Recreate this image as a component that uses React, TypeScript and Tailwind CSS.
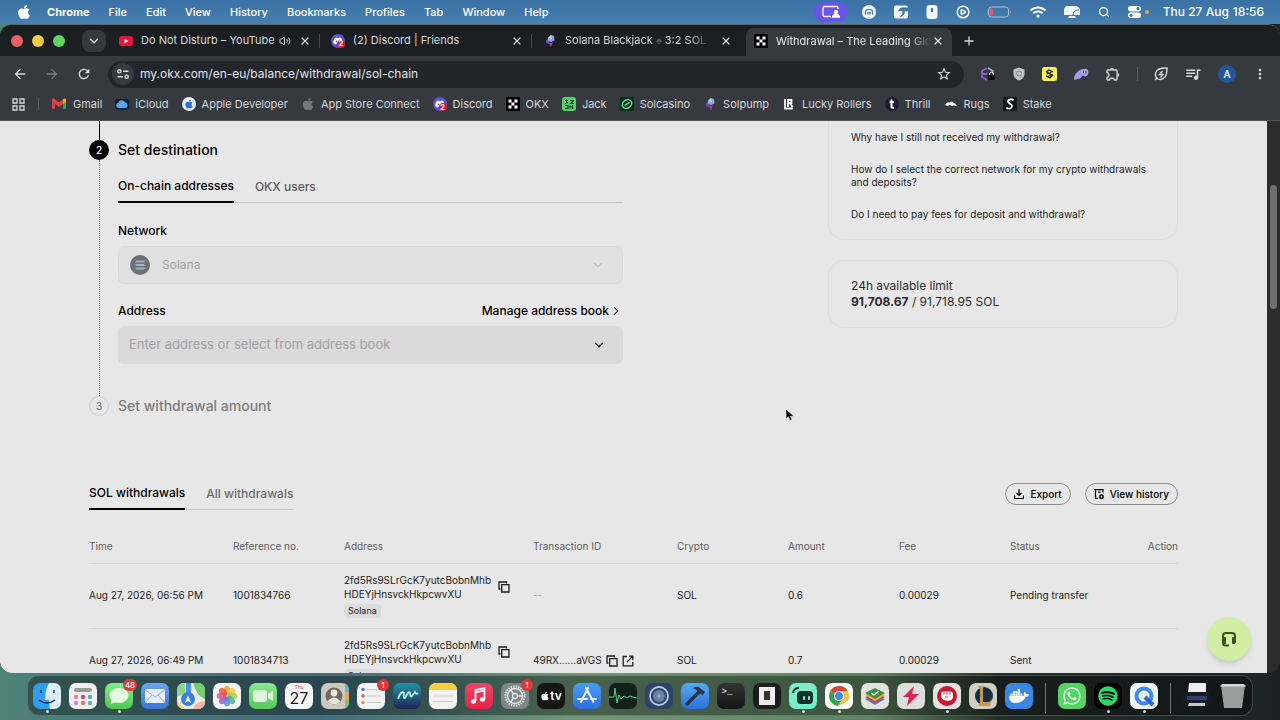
import React from "react";
import { ChevronDown, ChevronRight, CirclePlay, Plus, Search, Volume2, X } from "lucide-react";
import { FaApple, FaDiscord, FaDocker, FaSpotify, FaWhatsapp, FaWifi } from "react-icons/fa";
import {
  MdArrowBack,
  MdArrowForward,
  MdMoreVert,
  MdOutlineExtension,
  MdQueueMusic,
  MdRefresh,
  MdStarBorder,
} from "react-icons/md";

const menus = ["File", "Edit", "View", "History", "Bookmarks", "Profiles", "Tab", "Window", "Help"];

/* ---------- small brand icons ---------- */

function YoutubeIcon() {
  return (
    <svg viewBox="0 0 14 14" className="size-3.5 shrink-0">
      <rect y="2" width="14" height="10" rx="3" fill="#e0173f" />
      <path d="M5.5 4.8v4.4L9.4 7z" fill="#fff" />
    </svg>
  );
}

function DiscordIcon() {
  return (
    <span className="relative flex size-3.5 shrink-0 items-center justify-center rounded-full bg-[#5a55d6]">
      <FaDiscord className="size-2.5 text-white" />
      <span className="absolute right-0 bottom-0 flex size-2 items-center justify-center rounded-full bg-[#d2243f] text-[7px] leading-none font-bold text-white">
        2
      </span>
    </span>
  );
}

function SolpumpIcon() {
  return (
    <svg viewBox="0 0 14 14" className="size-3.5 shrink-0">
      <path d="M8 1l3 1 .5 4.5L8 8 4 7l1-3z" fill="#8fa6d8" />
      <path d="M3 6l4 1-1 3-3-1z" fill="#6b4fc0" />
      <path d="M6 9l4-.5L8 13z" fill="#9a48b8" />
      <path d="M8 1l1 4-4-1z" fill="#a7e0e0" />
    </svg>
  );
}

function OkxIcon() {
  return (
    <svg viewBox="0 0 14 14" className="size-3.5 shrink-0">
      <rect width="14" height="14" rx="1" fill="#000" />
      <path
        d="M2.5 2.5h3v3h-3zM8.5 2.5h3v3h-3zM5.5 5.5h3v3h-3zM2.5 8.5h3v3h-3zM8.5 8.5h3v3h-3z"
        fill="#fff"
      />
    </svg>
  );
}

function GmailIcon() {
  return (
    <svg viewBox="0 0 16 14" className="h-3.5 w-4 shrink-0">
      <path d="M12 6v6h3V3z" fill="#34a853" />
      <path d="M1 3c0-1.5 1.5-1.8 2.5-1L8 5.5 12.5 2c1-.8 2.5-.5 2.5 1v1.5L8 10 1 4.500z" fill="#e5413a" />
      <path d="M12 2.4c1.2-1 3-.6 3 1v1.2l-3 2.3z" fill="#fbbc04" />
      <path d="M1 4.500V12h3V6.800z" fill="#d93c52" />
    </svg>
  );
}

function CloudIcon() {
  return (
    <svg viewBox="0 0 14 14" className="size-3.5 shrink-0">
      <rect y="2" width="14" height="11" rx="3" fill="#14222f" />
      <path d="M3.500 11a2.700 2.700 0 01-.2-5.300A3.600 3.600 0 0110 5.200a3 3 0 01.5 5.800z" fill="#55a8ee" />
    </svg>
  );
}

function AppleDevIcon() {
  return (
    <span className="flex size-3.5 shrink-0 items-center justify-center rounded-full bg-[#e4eefb]">
      <FaApple className="size-2.5 text-[#2d6fd8]" />
    </span>
  );
}

function JackIcon() {
  return (
    <svg viewBox="0 0 14 14" className="size-3.5 shrink-0">
      <rect width="14" height="14" rx="3" fill="#55cf6a" />
      <path
        d="M3 3.500h3M4.500 2.500v4M3 6.500l3-1M8 3.500h3.500L9 6.500h2.500M3 8.500h3v3H3M8 8.500v3M8 10h3M10.500 8v4"
        stroke="#12401d"
        strokeWidth="1.2"
        fill="none"
      />
    </svg>
  );
}

function SolcasinoIcon() {
  return (
    <svg viewBox="0 0 14 14" className="size-3.5 shrink-0">
      <rect width="14" height="14" rx="2" fill="#0b2a1e" />
      <g transform="rotate(-35 7 7)" fill="none" stroke="#5fd99a" strokeWidth="1.5">
        <ellipse cx="7" cy="7" rx="5" ry="4" />
        <path d="M4 7h6" />
      </g>
    </svg>
  );
}

function LuckyIcon() {
  return (
    <svg viewBox="0 0 14 14" className="size-3.5 shrink-0">
      <path d="M3 2v9.500h8M6 10V3h3.500v3H6M8 6l2.500 4" stroke="#f4f4f4" strokeWidth="1.8" fill="none" />
    </svg>
  );
}

function ThrillIcon() {
  return (
    <svg viewBox="0 0 14 14" className="size-3.5 shrink-0">
      <circle cx="7" cy="7" r="7" fill="#1d1b33" />
      <path d="M6.500 2.500v7q0 1.500 2.500 1.300M4.500 5.200H9" stroke="#fff" strokeWidth="2" fill="none" />
    </svg>
  );
}

function RugsIcon() {
  return (
    <svg viewBox="0 0 14 14" className="size-3.5 shrink-0">
      <path d="M1 8q2-3.500 4.500-2.500Q8 3.500 9.500 6q2 0 3.500 3l-3-.5-2 .5-2-1-2.500 1z" fill="#f4f4f4" />
    </svg>
  );
}

function StakeIcon() {
  return (
    <svg viewBox="0 0 14 14" className="size-3.5 shrink-0">
      <rect width="14" height="14" rx="1" fill="#11191e" />
      <path
        d="M10.500 3.500C9 1.500 5 2 5 4.600 5 6.800 9.200 6.800 9 9.200 8.800 12 5 12.400 3.500 10.500"
        stroke="#fff"
        strokeWidth="1.8"
        fill="none"
      />
    </svg>
  );
}

function CopyIcon() {
  return (
    <svg viewBox="0 0 12 12" className="size-3 shrink-0" fill="none" stroke="currentColor" strokeWidth="1.3">
      <path d="M2.500 8H1V1h7.500v1.500" />
      <path d="M3.700 3.700H11V11H3.700z" />
    </svg>
  );
}

function OpenIcon() {
  return (
    <svg viewBox="0 0 12 12" className="size-3 shrink-0" fill="none" stroke="currentColor" strokeWidth="1.3">
      <path d="M5 1.500H1.200v9.300h9.600V7M7 1.200h3.800V5M10.600 1.400L5 7" />
    </svg>
  );
}

/* ---------- menu bar ---------- */

function MenuBar() {
  return (
    <header className="flex h-6 shrink-0 items-center justify-between bg-gradient-to-b from-[#3b71a4] to-[#467fb0] px-4 text-[11px] font-medium text-white">
      <nav className="flex items-center gap-[19px]">
        <FaApple className="-mr-1 size-4" />
        <button className="font-bold">Chrome</button>
        {menus.map((m) => (
          <button key={m}>{m}</button>
        ))}
      </nav>
      <div className="flex items-center">
        <span className="mr-[14px] flex h-5 w-[34px] items-center justify-center rounded-full bg-[#6a54e8]">
          <svg viewBox="0 0 18 14" className="h-3.5 w-[18px]" fill="none" stroke="#fff" strokeWidth="1.3">
            <path d="M9 11.500H2.500A1.500 1.500 0 011 10V3a1.500 1.500 0 011.500-1.500h12A1.500 1.500 0 0116 3v1" />
            <circle cx="14" cy="7" r="1.5" fill="#fff" />
            <path d="M10.500 12q.5-2.500 3.500-2.500t3.500 2.500z" fill="#fff" />
          </svg>
        </span>
        <div className="flex items-center gap-[18px]">
          <svg viewBox="0 0 14 14" className="size-3.5">
            <circle cx="7" cy="7" r="7" fill="#eef5fb" />
            <path d="M3.500 9.500V7q0-2.500 2.500-2.500h2Q10.500 4.500 10.500 7v2.500M6 9.500V7.500h2v2" stroke="#4178a9" strokeWidth="1.2" fill="none" />
          </svg>
          <svg viewBox="0 0 14 14" className="size-3.5">
            <rect width="14" height="13" y="0.5" rx="2" fill="#eef5fb" />
            <path d="M14 2.500H8Q5 3 4 6.500L8.500 6Q9 9 5 13 10.500 11 11 6.500L14 6z" fill="#4178a9" />
          </svg>
          <svg viewBox="0 0 12 14" className="h-3.5 w-3">
            <rect x="0.5" width="11" height="14" rx="3" fill="#eef5fb" />
            <path d="M6 3v4" stroke="#34526e" strokeWidth="1.6" />
          </svg>
          <CirclePlay className="size-3.5" strokeWidth={2.5} />
          <svg viewBox="0 0 24 12" className="h-3 w-6">
            <rect x="0.5" y="1" width="20" height="10" rx="3" fill="none" stroke="#a9c6df" />
            <rect x="2" y="2.5" width="3" height="7" rx="1" fill="#d85a78" />
            <path d="M22 4.500q1.500 1.500 0 3z" fill="#a9c6df" />
          </svg>
          <FaWifi className="size-4" />
          <svg viewBox="0 0 16 14" className="h-3.5 w-4">
            <path d="M2 1h11l3 3v6H0V4z" fill="#eef5fb" />
            <path d="M5 11h6l1 2H4z" fill="#eef5fb" />
            <path d="M9 10q0-5 6-5" stroke="#4178a9" fill="none" />
          </svg>
          <Search className="size-3" strokeWidth={2.5} />
          <span className="flex items-center gap-1">
            <svg viewBox="0 0 13 12" className="h-3 w-[13px]">
              <rect width="13" height="5.4" rx="2.7" fill="#fff" />
              <rect y="6.6" width="13" height="5.4" rx="2.7" fill="#fff" />
              <circle cx="10" cy="2.7" r="1.6" fill="#4178a9" />
              <circle cx="3" cy="9.3" r="1.6" fill="#4178a9" />
            </svg>
            <span className="size-1 rounded-full bg-[#f0a04b]" />
          </span>
        </div>
        <span className="ml-[14px] flex gap-1 text-[12px] whitespace-nowrap">
          <span>Thu 27 Aug</span>
          <span>18:56</span>
        </span>
      </div>
    </header>
  );
}

/* ---------- browser chrome ---------- */

const tabs = [
  { id: "youtube", title: "Do Not Disturb – YouTube", icon: <YoutubeIcon />, audio: true },
  { id: "discord", title: "(2) Discord | Friends", icon: <DiscordIcon /> },
  {
    id: "solpump",
    title: (
      <>
        Solana Blackjack <span className="text-[#55595d]">♠</span> 3:2 SOL
      </>
    ),
    icon: <SolpumpIcon />,
  },
  { id: "okx", title: "Withdrawal – The Leading Glo", icon: <OkxIcon />, active: true },
];

const bookmarks = [
  { label: "Gmail", icon: <GmailIcon /> },
  { label: "iCloud", icon: <CloudIcon /> },
  { label: "Apple Developer", icon: <AppleDevIcon /> },
  { label: "App Store Connect", icon: <FaApple className="size-3.5 text-[#74777b]" /> },
  { label: "Discord", icon: <DiscordIcon /> },
  { label: "OKX", icon: <OkxIcon /> },
  { label: "Jack", icon: <JackIcon /> },
  { label: "Solcasino", icon: <SolcasinoIcon /> },
  { label: "Solpump", icon: <SolpumpIcon /> },
  { label: "Lucky Rollers", icon: <LuckyIcon /> },
  { label: "Thrill", icon: <ThrillIcon /> },
  { label: "Rugs", icon: <RugsIcon /> },
  { label: "Stake", icon: <StakeIcon /> },
];

function TabStrip() {
  return (
    <div className="flex h-[31px] shrink-0 items-center bg-[#1b1f21] pl-[11px] text-[11px] text-[#d5d8dc]">
      <div className="flex gap-[9px]">
        <span className="size-3 rounded-full bg-[#ec5f67]" />
        <span className="size-3 rounded-full bg-[#f3cb45]" />
        <span className="size-3 rounded-full bg-[#5fd35f]" />
      </div>
      <button aria-label="Search tabs" className="ml-[17px] flex h-[22px] w-6 items-center justify-center rounded-lg bg-[#35383d]">
        <ChevronDown className="size-3.5" strokeWidth={2.5} />
      </button>
      <div className="ml-0.5 flex h-full items-center">
        {tabs.map((t, i) => (
          <div
            key={t.id}
            className={
              t.active
                ? "ml-0.5 flex h-7 w-[206px] items-center gap-2 self-end rounded-t-lg bg-[#36393e] px-2 pb-0.5 text-[#e6e8ea]"
                : "flex h-7 w-[212px] items-center gap-2 pr-3 pl-[11px]"
            }
          >
            {t.icon}
            <span
              className={
                i > 1
                  ? "flex-1 overflow-hidden [mask-image:linear-gradient(to_right,black_85%,transparent)] whitespace-nowrap"
                  : "flex-1 overflow-hidden whitespace-nowrap"
              }
            >
              {t.title}
            </span>
            {t.audio && <Volume2 className="-ml-1 size-3 shrink-0" />}
            <button aria-label="Close tab" className={t.active ? "-ml-2" : ""}>
              <X className="size-3" strokeWidth={2.5} />
            </button>
            {i < 2 && <span className="-mr-3 h-3.5 w-px bg-[#44484c]" />}
          </div>
        ))}
      </div>
      <button aria-label="New tab" className="ml-2.5">
        <Plus className="size-3.5" strokeWidth={2.2} />
      </button>
    </div>
  );
}

function Toolbar() {
  return (
    <div className="flex h-9 shrink-0 items-center bg-[#36393e] text-[#d5d8dc]">
      <div className="flex items-center gap-4 pl-3">
        <button aria-label="Back">
          <MdArrowBack className="size-4" />
        </button>
        <button aria-label="Forward" className="text-[#7b7f84]">
          <MdArrowForward className="size-4" />
        </button>
        <button aria-label="Reload">
          <MdRefresh className="size-4" />
        </button>
      </div>
      <div className="ml-4 flex h-[27px] flex-1 items-center rounded-full bg-[#22252a] pr-3 pl-1">
        <span className="flex size-[22px] items-center justify-center rounded-full bg-[#36393e]">
          <svg viewBox="0 0 12 10" className="h-2.5 w-3" fill="none" stroke="currentColor" strokeWidth="1.4">
            <circle cx="2.3" cy="2.3" r="1.6" />
            <path d="M6 2.300h5.500M.5 7.700H6" />
            <circle cx="9.7" cy="7.7" r="1.6" />
          </svg>
        </span>
        <input
          aria-label="Address bar"
          defaultValue="my.okx.com/en-eu/balance/withdrawal/sol-chain"
          className="ml-1.5 min-w-0 flex-1 bg-transparent text-[12px] text-[#e1e4e7] outline-none"
        />
        <MdStarBorder className="size-4" />
      </div>
      <div className="flex items-center gap-4 pr-3 pl-4">
        <svg viewBox="0 0 16 14" className="h-3.5 w-4">
          <path d="M7 1L2 4v6l5 3M2 7h5" stroke="#8a63d2" strokeWidth="1.8" fill="none" />
          <path d="M8 1l5 3v3" stroke="#9fb3d8" strokeWidth="1.5" fill="none" />
          <rect x="8" y="7.5" width="7" height="5.5" rx="1" fill="#0c0d0f" />
          <path d="M9.700 8V6q1.800-2 3.600 0v2" stroke="#fff" fill="none" />
        </svg>
        <svg viewBox="0 0 14 14" className="size-3.5">
          <path d="M7 .5l5.500 2v5Q12 11.500 7 13.500 2 11.500 1.500 7.500v-5z" fill="#c0c3c6" />
          <circle cx="7" cy="6.5" r="2.5" fill="none" stroke="#83878b" />
        </svg>
        <svg viewBox="0 0 15 14" className="h-3.5 w-[15px]">
          <rect width="15" height="14" rx="2.5" fill="#f5ef58" />
          <path d="M11 5L7 3 4.500 5l6 3.500L8 11 4 9M4.500 7l5-1.500M6 9.500l5-1.500" stroke="#222" strokeWidth="1.3" fill="none" />
        </svg>
        <svg viewBox="0 0 16 14" className="h-3.5 w-4">
          <path d="M1 12.500Q1 7 6 3.500 10 1 14 2q2 2 1 5.500-2 3-4 1.500l-1.500-.5Q7 13 5 11.500 3 13.500 1 12.500z" fill="#a79be8" />
          <path d="M10.500 4v2M12.800 4v2" stroke="#4b4480" />
        </svg>
        <MdOutlineExtension className="size-4" />
        <span className="h-3.5 w-px bg-[#5a5e63]" />
        <svg viewBox="0 0 14 14" className="size-3.5" fill="none" stroke="currentColor" strokeWidth="1.4">
          <path d="M13 1Q4 .5 2 5q-1.500 4 1 6.500Q7 14 11 10q2-2.500 2-9zM1 13l2.500-2.500M8.500 4L5.500 7.500h3.500L6.500 10.500" />
        </svg>
        <MdQueueMusic className="size-[18px]" />
        <span className="flex size-[18px] items-center justify-center rounded-full bg-[#24559b] text-[10px] font-medium text-white">A</span>
        <MdMoreVert className="size-4" />
      </div>
    </div>
  );
}

function BookmarksBar() {
  return (
    <div className="flex h-[29px] shrink-0 items-center border-b border-[#55575b] bg-[#36393e] pb-1 pl-3 text-[11px] text-[#d5d8dc]">
      <svg viewBox="0 0 13 13" className="size-[13px]" fill="none" stroke="currentColor" strokeWidth="1.3">
        <path d="M1 1h4v4H1zM8 1h4v4H8zM1 8h4v4H1zM8 8h4v4H8z" />
      </svg>
      <span className="mr-3 ml-[13px] h-3 w-px bg-[#5a5e63]" />
      <div className="flex items-center gap-[13px]">
        {bookmarks.map((b) => (
          <a key={b.label} href="#" className="flex items-center gap-1.5 whitespace-nowrap">
            {b.icon}
            {b.label}
          </a>
        ))}
      </div>
    </div>
  );
}

/* ---------- page ---------- */

function SolanaLogo() {
  return (
    <svg viewBox="0 0 20 20" className="size-5 shrink-0">
      <circle cx="10" cy="10" r="10" fill="#6d7175" />
      <path d="M6.500 5.500h9L14 7.500H5zM5 9h9l1.500 2h-9zM6.500 12.500h9L14 14.500H5z" fill="#9db3c8" />
    </svg>
  );
}

function WithdrawForm() {
  return (
    <section className="w-[534px]">
      <div className="flex gap-[9px]">
        <div className="flex w-5 flex-col items-center">
          <span className="h-[19px] w-px bg-black" />
          <span className="flex size-5 items-center justify-center rounded-full bg-black text-[10px] font-medium text-white">2</span>
          <span className="w-px flex-1 border-l border-dotted border-[#777]" />
        </div>
        <div className="flex-1 pt-[19px] pb-8">
          <h2 className="text-[14px] leading-5 font-medium">Set destination</h2>
          <div className="mt-3.5 flex gap-[21px] border-b border-[#c6c6c6] text-[12px] leading-6">
            <button className="-mb-px border-b-2 border-black pb-[3px] font-medium">On-chain addresses</button>
            <button className="pb-[3px] font-medium text-[#5c5c5c]">OKX users</button>
          </div>
          <label htmlFor="network" className="mt-[18px] block text-[12px] leading-5 font-medium">
            Network
          </label>
          <div className="mt-[5px] flex h-[38px] items-center gap-3 rounded-md border border-[#dadada] bg-[#e0e0e0] pr-[17px] pl-[11px]">
            <SolanaLogo />
            <select id="network" disabled className="flex-1 appearance-none bg-transparent text-[12px] text-[#a3a3a3] opacity-100">
              <option>Solana</option>
            </select>
            <ChevronDown className="size-3.5 text-[#c4c4c4]" />
          </div>
          <div className="mt-[17px] flex items-center justify-between text-[12px] leading-5 font-medium">
            <label htmlFor="address">Address</label>
            <a href="#" className="flex items-center">
              Manage address book
              <ChevronRight className="size-3.5" strokeWidth={1.8} />
            </a>
          </div>
          <div className="mt-[5px] flex h-[38px] items-center rounded-md bg-[#dadada] pr-[17px] pl-[11px]">
            <input
              id="address"
              placeholder="Enter address or select from address book"
              className="min-w-0 flex-1 bg-transparent text-[13px] outline-none placeholder:text-[#a0a0a0]"
            />
            <button aria-label="Open address book">
              <ChevronDown className="size-3.5" strokeWidth={2.2} />
            </button>
          </div>
        </div>
      </div>
      <div className="flex items-center gap-[9px]">
        <span className="flex size-5 items-center justify-center rounded-full border border-[#cfcfcf] text-[10px] text-[#6d6d6d]">3</span>
        <h2 className="text-[14px] leading-5 font-medium text-[#7c7c7c]">Set withdrawal amount</h2>
      </div>
    </section>
  );
}

function SideCards() {
  return (
    <aside className="w-[350px]">
      <div className="flex flex-col gap-[19px] rounded-b-2xl border border-t-0 border-[#dedede] px-[22px] pt-[10px] pb-[18px] text-[10px] leading-[13px] text-[#1d1d1d]">
        <a href="#">Why have I still not received my withdrawal?</a>
        <a href="#">How do I select the correct network for my crypto withdrawals and deposits?</a>
        <a href="#">Do I need to pay fees for deposit and withdrawal?</a>
      </div>
      <div className="mt-5 rounded-2xl border border-[#dedede] px-[22px] py-[17px] text-[12px] leading-4 text-[#2b2b2b]">
        <p>24h available limit</p>
        <p>
          <b>91,708.67</b> / 91,718.95 SOL
        </p>
      </div>
    </aside>
  );
}

const withdrawals = [
  { time: "Aug 27, 2026, 06:56 PM", ref: "1001834766", tx: "", amount: "0.6", fee: "0.00029", status: "Pending transfer" },
  { time: "Aug 27, 2026, 06:49 PM", ref: "1001834713", tx: "49RX......aVGS", amount: "0.7", fee: "0.00029", status: "Sent" },
];

function History() {
  return (
    <section className="mt-[67px]">
      <div className="flex items-start justify-between">
        <div className="flex gap-[21px] border-b border-[#c6c6c6] text-[12px] leading-5 font-medium">
          <button className="-mb-px border-b-2 border-black pb-[5px]">SOL withdrawals</button>
          <button className="pb-[5px] text-[#6a6a6a]">All withdrawals</button>
        </div>
        <div className="flex gap-3.5 text-[10px] font-medium">
          <button className="flex h-[22px] items-center gap-1.5 rounded-full border border-[#8c8c8c] px-2">
            <svg viewBox="0 0 10 10" className="size-2.5" fill="none" stroke="currentColor" strokeWidth="1.2">
              <path d="M5 0v6.500M2.500 4L5 6.500 7.500 4M.6 6.500v3h8.800v-3" />
            </svg>
            Export
          </button>
          <button className="flex h-[22px] items-center gap-1.5 rounded-full border border-[#8c8c8c] px-2">
            <svg viewBox="0 0 10 10" className="size-2.5" fill="none" stroke="currentColor" strokeWidth="1.2">
              <path d="M4 9.400H1.500V.6H9v3M4 3.200h2.500M1.500 .6H0" />
              <rect x="6" y="6" width="3" height="3.4" rx="1" strokeWidth="1.5" />
            </svg>
            View history
          </button>
        </div>
      </div>
      <table className="mt-5 w-full table-fixed text-left text-[10px]">
        <colgroup>
          <col className="w-[144px]" />
          <col className="w-[111px]" />
          <col className="w-[189px]" />
          <col className="w-[144px]" />
          <col className="w-[111px]" />
          <col className="w-[111px]" />
          <col className="w-[111px]" />
          <col className="w-[111px]" />
          <col />
        </colgroup>
        <thead>
          <tr className="h-[33px] border-b border-[#d8d8d8] text-[#5e5e5e]">
            <th className="font-normal">Time</th>
            <th className="font-normal">Reference no.</th>
            <th className="font-normal">Address</th>
            <th className="font-normal">Transaction ID</th>
            <th className="font-normal">Crypto</th>
            <th className="font-normal">Amount</th>
            <th className="font-normal">Fee</th>
            <th className="font-normal">Status</th>
            <th className="text-right font-normal">Action</th>
          </tr>
        </thead>
        <tbody>
          {withdrawals.map((w) => (
            <tr key={w.ref} className="h-[65px] border-b border-[#d8d8d8] text-[#1d1d1d]">
              <td>{w.time}</td>
              <td>{w.ref}</td>
              <td>
                <div className="flex gap-[7px]">
                  <div className="leading-[14px]">
                    2fd5Rs9SLrGcK7yutcBobnMhb
                    <br />
                    HDEYjHnsvckHkpcwvXU
                  </div>
                  <button aria-label="Copy address" className="self-center">
                    <CopyIcon />
                  </button>
                </div>
                <span className="mt-[3px] block w-fit rounded-sm bg-[#dcdcdc] px-1 text-[9px] leading-[14px]">Solana</span>
              </td>
              <td>
                {w.tx ? (
                  <div className="flex items-center gap-1">
                    {w.tx}
                    <button aria-label="Copy transaction">
                      <CopyIcon />
                    </button>
                    <a href="#" aria-label="Open in explorer">
                      <OpenIcon />
                    </a>
                  </div>
                ) : (
                  <span className="text-[#a8a8a8]">--</span>
                )}
              </td>
              <td>SOL</td>
              <td>{w.amount}</td>
              <td>{w.fee}</td>
              <td>{w.status}</td>
              <td />
            </tr>
          ))}
        </tbody>
      </table>
    </section>
  );
}

/* ---------- dock ---------- */

type TileProps = {
  bg: string;
  badge?: string;
  running?: boolean;
  children?: React.ReactNode;
};

function Tile({ bg, badge, running, children }: TileProps) {
  return (
    <div className="relative flex shrink-0 flex-col items-center">
      <div className={`flex h-[26px] w-7 items-center justify-center overflow-hidden rounded-[7px] ${bg}`}>{children}</div>
      {badge && (
        <span className="absolute -top-1 -right-1 flex h-3 min-w-3 items-center justify-center rounded-full bg-[#d93a3c] px-0.5 text-[8px] leading-none text-white">
          {badge}
        </span>
      )}
      <span className={running ? "mt-px size-[3px] rounded-full bg-white/80" : "mt-px size-[3px]"} />
    </div>
  );
}

const petals = ["#f29a38", "#f5c93d", "#a7cf4a", "#4fb58a", "#4f95d8", "#8a66c9", "#d65a9c", "#e8553f"];

function Dock() {
  return (
    <footer className="mx-auto mt-0.5 mb-1 flex h-[41px] shrink-0 items-center gap-2 rounded-xl border border-white/20 bg-black/35 px-[5px] pt-1">
      <Tile bg="bg-[#2f9df0]" running>
        <svg viewBox="0 0 28 26" className="size-full">
          <path d="M16 0h12v26H17q-1-5-1-9h-4q0-10 4-17z" fill="#dcecf8" />
          <path d="M8 7v3M21 7v3M6 17q8 6 16 0" stroke="#123" strokeWidth="1.3" fill="none" />
        </svg>
      </Tile>
      <Tile bg="bg-[#efefef]">
        <svg viewBox="0 0 28 26" className="size-full">
          <rect x="5" y="5" width="18" height="4" rx="2" fill="#9a9a9a" />
          <rect x="5" y="12" width="4" height="4" rx="1" fill="#e9829a" />
          <rect x="12" y="12" width="4" height="4" rx="1" fill="#d4408a" />
          <rect x="19" y="12" width="4" height="4" rx="1" fill="#4fb8a0" />
          <rect x="5" y="18" width="4" height="4" rx="1" fill="#c389d8" />
          <rect x="12" y="18" width="4" height="4" rx="1" fill="#e07a55" />
          <rect x="19" y="18" width="4" height="4" rx="1" fill="#6aa8e6" />
        </svg>
      </Tile>
      <Tile bg="bg-gradient-to-b from-[#8cea84] to-[#4fc552]" badge="48" running>
        <svg viewBox="0 0 28 26" className="size-full">
          <ellipse cx="14" cy="12.5" rx="9.5" ry="7.5" fill="#e4f9e2" />
          <path d="M7 16l-1.500 5 6-2z" fill="#e4f9e2" />
        </svg>
      </Tile>
      <Tile bg="bg-gradient-to-b from-[#6ba4ee] to-[#3d74d8]">
        <svg viewBox="0 0 28 26" className="size-full">
          <rect x="4" y="6" width="20" height="14" rx="2" fill="#e6effa" />
          <path d="M4.500 7L14 14l9.500-7M4.500 19.500L11 12M23.500 19.500L17 12" stroke="#8fb2e0" fill="none" />
        </svg>
      </Tile>
      <Tile bg="bg-[#e9efe4]">
        <svg viewBox="0 0 28 26" className="size-full">
          <path d="M16 0h12v16Q20 14 16 0z" fill="#76cc70" />
          <path d="M0 0h8v10L0 14z" fill="#8fd588" />
          <path d="M9 0h5v12H9z" fill="#4c8df0" />
          <path d="M16 26q3-8 12-8v8z" fill="#f4b6a2" />
          <path d="M0 18v8h8z" fill="#f3d36c" />
          <circle cx="11" cy="16" r="7" fill="#3b7de0" />
          <path d="M8 20l3-8 3 8-3-2z" fill="#fff" />
        </svg>
      </Tile>
      <Tile bg="bg-[#f4f4f2]">
        <svg viewBox="0 0 28 26" className="size-full">
          {petals.map((c, i) => (
            <ellipse key={c} cx="14" cy="7.5" rx="3.2" ry="4.8" fill={c} opacity="0.85" transform={`rotate(${i * 45} 14 13)`} />
          ))}
        </svg>
      </Tile>
      <Tile bg="bg-gradient-to-b from-[#8ae888] to-[#56c95c]">
        <svg viewBox="0 0 28 26" className="size-full">
          <rect x="4" y="7" width="14" height="12" rx="3" fill="#dff7dd" />
          <path d="M19 11l5-3v10l-5-3z" fill="#dff7dd" />
        </svg>
      </Tile>
      <Tile bg="bg-[#f6f6f6]">
        <div className="flex flex-col items-center leading-none">
          <span className="text-[5px] text-[#d5383a]">Thu</span>
          <span className="text-[16px] leading-4 text-[#222]">27</span>
        </div>
      </Tile>
      <Tile bg="bg-[#cfc9bd]">
        <svg viewBox="0 0 28 26" className="size-full">
          <path d="M24 0h4v9h-4z" fill="#5fb6d8" />
          <path d="M24 9h4v8h-4z" fill="#e8a25a" />
          <path d="M24 17h4v9h-4z" fill="#7cc47b" />
          <circle cx="13" cy="13" r="8.5" fill="#6e6a66" />
          <circle cx="13" cy="10" r="3.4" fill="#e8e4dc" />
          <path d="M6.500 18.500q6.500-8 13 0Q13 24 6.500 18.500z" fill="#e8e4dc" />
        </svg>
      </Tile>
      <Tile bg="bg-[#f3f3f3]" badge="1">
        <svg viewBox="0 0 28 26" className="size-full">
          <circle cx="6" cy="6.5" r="1.8" fill="#4a7fe0" />
          <circle cx="6" cy="13" r="1.8" fill="#dd5b4a" />
          <circle cx="6" cy="19.5" r="1.8" fill="#e8963c" />
          <path d="M10 6.500h14M10 13h14M10 19.500h14" stroke="#c9c9c9" />
        </svg>
      </Tile>
      <Tile bg="bg-gradient-to-b from-[#1c96a5] to-[#1c2657]">
        <svg viewBox="0 0 28 26" className="size-full">
          <path d="M5 16q3-9 6-6-1 6 1 5 4-8 5-5 0 5 2 3l3-4q1 3 3 1" stroke="#b9ecf3" strokeWidth="1.8" fill="none" />
        </svg>
      </Tile>
      <Tile bg="bg-[#f4f3ef]">
        <svg viewBox="0 0 28 26" className="size-full">
          <path d="M0 0h28v7H0z" fill="#f5cf3e" />
          <path d="M4 13h20M4 18.500h20" stroke="#c8c8c8" />
        </svg>
      </Tile>
      <Tile bg="bg-gradient-to-b from-[#f0436a] to-[#df2549]">
        <svg viewBox="0 0 28 26" className="size-full">
          <path d="M10.500 18V7l9-2v11" stroke="#fff" strokeWidth="1.8" fill="none" />
          <path d="M10.500 9.500l9-2" stroke="#fff" strokeWidth="1.5" />
          <ellipse cx="8.5" cy="18.5" rx="2.6" ry="2.2" fill="#fff" />
          <ellipse cx="17.5" cy="16.5" rx="2.6" ry="2.2" fill="#fff" />
        </svg>
      </Tile>
      <Tile bg="bg-[#818689]" badge="1">
        <svg viewBox="0 0 28 26" className="size-full" fill="none" stroke="#e1e3e5">
          <circle cx="14" cy="13" r="9.5" strokeWidth="2" strokeDasharray="1.5 1" />
          <circle cx="14" cy="13" r="7.5" strokeWidth="1.3" />
          <circle cx="14" cy="13" r="2.5" strokeWidth="1.3" />
          <path d="M16.500 13H22M12.500 11L9.500 6.500M12.500 15l-3 4.500" strokeWidth="1.4" />
        </svg>
      </Tile>
      <Tile bg="bg-[#161616]">
        <span className="flex items-center text-[12px] leading-none font-semibold text-white">
          <FaApple className="size-2.5" />
          tv
        </span>
      </Tile>
      <Tile bg="bg-gradient-to-b from-[#4a9cf4] to-[#2c6fe0]">
        <svg viewBox="0 0 28 26" className="size-full" stroke="#eef5fd" strokeWidth="2" strokeLinecap="round">
          <path d="M15 5L8 19M13 5l7.500 14M5 16h9M18 16h5" />
        </svg>
      </Tile>
      <Tile bg="bg-[#14201b]">
        <svg viewBox="0 0 28 26" className="size-full">
          <path d="M0 14h5l1-9 2 15 2-8 2 4 3-3 3 2 3-2 3 1 4 1" stroke="#5fce86" fill="none" />
        </svg>
      </Tile>
      <Tile bg="bg-[#2d4468]">
        <svg viewBox="0 0 28 26" className="size-full" fill="none">
          <circle cx="14" cy="13" r="9" stroke="#b9c8dd" strokeWidth="1.8" />
          <circle cx="14" cy="13" r="6" fill="#6a82a6" />
          <circle cx="14" cy="13" r="1.5" fill="#a5b7d0" />
        </svg>
      </Tile>
      <Tile bg="bg-gradient-to-b from-[#56a9f3] to-[#2d70da]">
        <svg viewBox="0 0 28 26" className="size-full">
          <path d="M6 21L18 9" stroke="#22303f" strokeWidth="3.2" strokeLinecap="round" />
          <path d="M12 5q5-3 8 1l4 3-2.500 3.500-3.500-3q-2-3-6-4.500z" fill="#2b3643" />
        </svg>
      </Tile>
      <Tile bg="bg-gradient-to-b from-[#343434] to-[#161616]">
        <span className="mr-2 mb-1.5 font-['Liberation_Mono',monospace] text-[9px] text-white">&gt;_</span>
      </Tile>
      <Tile bg="bg-[#1c1c1c]">
        <svg viewBox="0 0 28 26" className="size-full">
          <rect x="6" y="4" width="16" height="18" fill="#ececec" />
          <rect x="11" y="8" width="6" height="9" fill="#333" />
        </svg>
      </Tile>
      <Tile bg="bg-[#79ecc8]" running>
        <svg viewBox="0 0 28 26" className="size-full">
          <path d="M4 10q1-5 6-5" stroke="#10302c" strokeWidth="2" fill="none" />
          <rect x="8" y="8" width="16" height="13" rx="4" fill="#10302c" />
          <rect x="14" y="13" width="2" height="4" rx="1" fill="#79ecc8" />
          <rect x="19" y="13" width="2" height="4" rx="1" fill="#79ecc8" />
        </svg>
      </Tile>
      <Tile bg="bg-white" running>
        <svg viewBox="0 0 28 26" className="size-full">
          <path d="M14 13V3a10 10 0 018.700 15L14 23z" fill="#f6c344" />
          <path d="M14 13L5.300 8A10 10 0 0013 23l5-8z" fill="#37a455" />
          <path d="M5.300 8A10 10 0 0122.700 8H14v5z" fill="#dc4437" />
          <circle cx="14" cy="13" r="5" fill="#fff" />
          <circle cx="14" cy="13" r="3.9" fill="#4384ee" />
        </svg>
      </Tile>
      <Tile bg="bg-[#e2e2df]">
        <svg viewBox="0 0 28 26" className="size-full">
          <path d="M4 16l10-4 10 4-10 6z" fill="#4b7ed0" />
          <path d="M4 14l10-4 10 4-10 6z" fill="#d6453a" />
          <path d="M4 12l10-4 10 4-10 6z" fill="#eeb43e" />
          <path d="M4 10l10-5 10 5-10 6z" fill="#3f8f46" />
          <path d="M10 10l3 2 5-4" stroke="#fff" strokeWidth="1.3" fill="none" />
        </svg>
      </Tile>
      <Tile bg="bg-[#dededd]">
        <svg viewBox="0 0 28 26" className="size-full">
          <path d="M17 3L6 14h6l-2 9 12-12h-7z" fill="#dc2550" />
        </svg>
      </Tile>
      <Tile bg="bg-[#e6e2e0]" running>
        <svg viewBox="0 0 28 26" className="size-full">
          <circle cx="14" cy="13" r="10" fill="#c9152f" />
          <path d="M8 11q0-2.500 2.500-2.500h7q2.500 0 2.500 2.500v2.500q0 3-2.500 4h-2l-.5 1-1-1H12q-4-1.500-4-4z" fill="#fff" />
          <path d="M11 8.500v3.500M14 8.500v3.500M17 8.500v3.500M12 14h3" stroke="#c9152f" strokeWidth="0.8" />
        </svg>
      </Tile>
      <Tile bg="bg-[#cfcdc6]">
        <svg viewBox="0 0 28 26" className="size-full">
          <circle cx="15" cy="13" r="9" fill="#15303c" />
          <path d="M9 3h7l-2 2v14h6l3-3-2 7H9l2-3V6z" fill="#c39a4e" />
        </svg>
      </Tile>
      <Tile bg="bg-[#3a86e0]">
        <FaDocker className="size-5 text-white" />
      </Tile>
      <span className="mx-1 h-[30px] w-px bg-white/40" />
      <Tile bg="bg-[#55d466]">
        <FaWhatsapp className="size-5 text-[#e8fbe9]" />
      </Tile>
      <Tile bg="bg-black" running>
        <FaSpotify className="size-5 text-[#2fd565]" />
      </Tile>
      <Tile bg="bg-[#f0f4fa]" running>
        <svg viewBox="0 0 28 26" className="size-full" fill="none">
          <circle cx="14" cy="13" r="7.5" stroke="#3f8be8" strokeWidth="4" />
          <path d="M15 14l8 8" stroke="#2d67d6" strokeWidth="4" />
        </svg>
      </Tile>
      <span className="mx-1 h-[30px] w-px bg-white/40" />
      <Tile bg="bg-transparent">
        <svg viewBox="0 0 28 26" className="size-full">
          <path d="M6 0h17v10H5z" fill="#eee" />
          <path d="M2 9h24l2 3v8l-3 2H3l-3-3v-6z" fill="#171b28" />
          <path d="M4 13h20v4H4z" fill="#333f66" />
          <path d="M6 20h16v3H5z" fill="#c9c9c9" />
        </svg>
      </Tile>
      <Tile bg="bg-transparent">
        <svg viewBox="0 0 28 26" className="size-full">
          <path d="M2 2h24l-3 23H5z" fill="#a9adab" opacity="0.9" />
          <path d="M1 1h26v2.500H1z" fill="#d8dad9" />
        </svg>
      </Tile>
    </footer>
  );
}

export default function App() {
  return (
    <div className="relative flex h-screen flex-col overflow-hidden bg-[linear-gradient(to_right,#4f8279,#3f6c7c_25%,#6f9678_45%,#5f8462_68%,#26302b_78%,#1b2224)] font-[Inter,sans-serif]">
      <MenuBar />
      <div className="relative flex min-h-0 flex-1 flex-col overflow-hidden rounded-xl border-t border-[#5d6468] bg-[#1b1f21]">
        <TabStrip />
        <Toolbar />
        <BookmarksBar />
        <div className="flex min-h-0 flex-1 bg-[#2c2c2c]">
          <main className="min-w-0 flex-1 overflow-hidden bg-[#e7e7e7] px-[89px] text-black">
            <div className="flex items-start justify-between">
              <WithdrawForm />
              <SideCards />
            </div>
            <History />
          </main>
          <div className="flex w-[13px] flex-col items-center">
            <span className="mt-16 h-[124px] w-[7px] rounded-full bg-[#6f6f6f]" />
          </div>
        </div>
        <button
          aria-label="Support"
          className="absolute right-[29px] bottom-3 flex size-11 items-center justify-center rounded-full bg-[#d2eda4] shadow-md"
        >
          <svg viewBox="0 0 16 16" className="size-4" fill="none" stroke="#34561c" strokeWidth="2">
            <path d="M2 12V5q0-3 3-3h6q3 0 3 3v7M2 12q0 2.500 2.500 2.500H8" />
            <path d="M2 6.500h2.500v6H2zM11.500 6.500H14v6h-2.500z" fill="#34561c" strokeWidth="1" />
          </svg>
        </button>
      </div>
      <Dock />
      <svg viewBox="0 0 10 14" className="absolute top-[408px] left-[785px] h-3.5 w-2.5">
        <path d="M1 1v10l2.500-2.200L5 12.500l2-.8L5.500 8.300H9z" fill="#000" stroke="#fff" strokeWidth="0.6" />
      </svg>
    </div>
  );
}
